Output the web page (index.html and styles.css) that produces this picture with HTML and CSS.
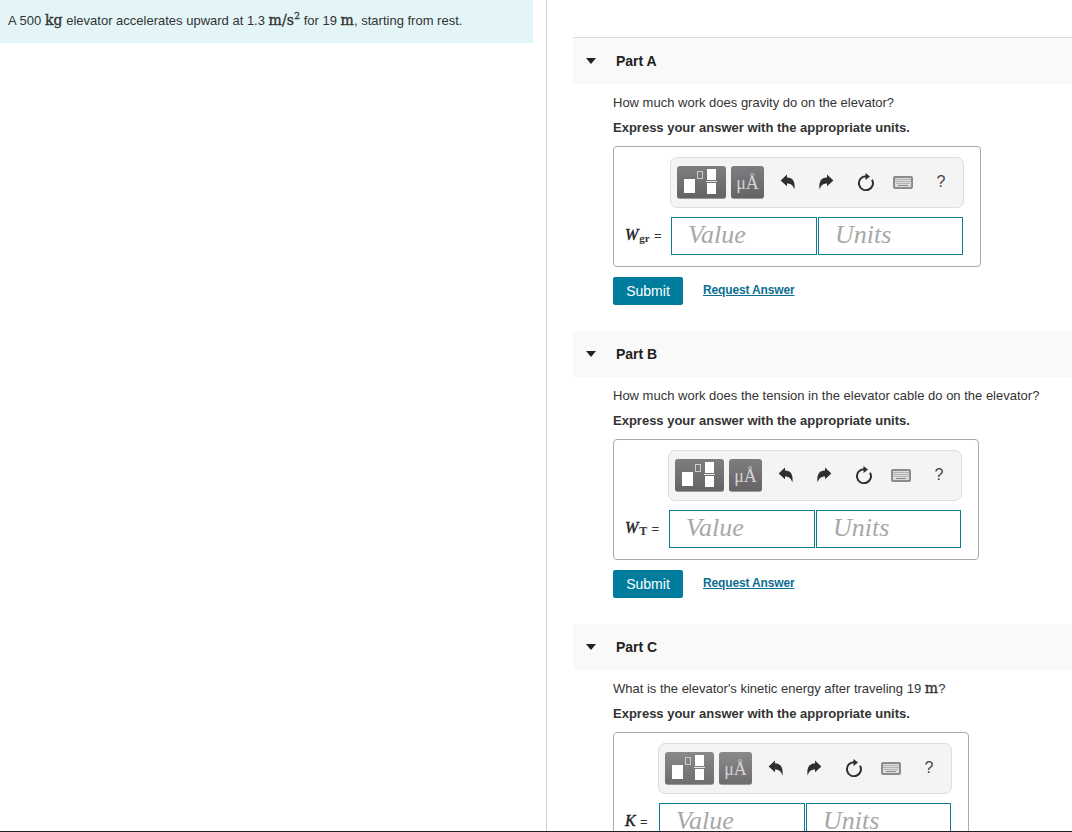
FILE: index.html
```html
<!DOCTYPE html>
<html lang="en">
<head>
<meta charset="utf-8">
<title>Elevator work problem</title>
<link rel="stylesheet" href="styles.css">
</head>
<body>
<svg class="defs" width="0" height="0" aria-hidden="true">
  <symbol id="i-undo" viewBox="0 0 16 16"><path d="M.6 6.4 7 .6V3.6C12 3.4 15.6 6.8 14.4 15.4 13.2 11.4 11 9.4 7 9.4V12.2Z"/></symbol>
  <symbol id="i-redo" viewBox="0 0 16 16"><path d="M15.4 6.4 9 .6V3.6C4 3.4.4 6.8 1.6 15.4 2.8 11.4 5 9.4 9 9.4V12.2Z"/></symbol>
  <symbol id="i-reset" viewBox="0 0 18 18"><path d="M15 6.7A7 7 0 1 1 9 3.2" fill="none" stroke="currentColor" stroke-width="2"/><path d="M8.5 0 13 3.5 8.5 7Z"/></symbol>
  <symbol id="i-kbd" viewBox="0 0 20 13"><rect x=".5" y=".5" width="19" height="12" rx="1.2" fill="#8b8b8b" stroke="#8b8b8b"/><rect x="2" y="2" width="16" height="9" fill="#dcdcdc"/><path d="M2.5 3.5H17.5M2.5 5.5H17.5M3.5 7.5H16.5" stroke="#8a8a8a" stroke-dasharray="1 1" fill="none"/><path d="M5 9.5H15" stroke="#8a8a8a" fill="none"/></symbol>
</svg>
<div class="page">
  <aside class="intro">
    <p class="statement">A 500 <span class="math">kg</span> elevator accelerates upward at 1.3 <span class="math">m/s<sup>2</sup></span> for 19 <span class="math">m</span>, starting from rest.</p>
  </aside>
  <main class="parts">
    <section class="part">
      <h2 class="part-head part-first"><span class="caret"></span>Part A</h2>
      <div class="part-body">
        <p class="question">How much work does gravity do on the elevator?</p>
        <p class="instruction">Express your answer with the appropriate units.</p>
        <div class="answer answer-a">
          <div class="toolbar">
            <button class="tool tool-template" type="button" aria-label="Templates"><span class="box-big"></span><span class="box-small"></span><span class="frac"><span></span><span></span></span></button>
            <button class="tool tool-symbol" type="button">μÅ</button>
            <svg class="ti"><use href="#i-undo"/></svg>
            <svg class="ti"><use href="#i-redo"/></svg>
            <svg class="ti ti-reset"><use href="#i-reset"/></svg>
            <svg class="ti ti-kbd"><use href="#i-kbd"/></svg>
            <span class="ti ti-help">?</span>
          </div>
          <div class="label"><i>W</i><sub>gr</sub> <span>=</span></div>
          <div class="fields"><input class="field" placeholder="Value"><input class="field" placeholder="Units"></div>
        </div>
        <div class="actions"><button class="submit" type="button">Submit</button><a class="request" href="#">Request Answer</a></div>
      </div>
    </section>
    <section class="part">
      <h2 class="part-head"><span class="caret"></span>Part B</h2>
      <div class="part-body">
        <p class="question">How much work does the tension in the elevator cable do on the elevator?</p>
        <p class="instruction">Express your answer with the appropriate units.</p>
        <div class="answer answer-b">
          <div class="toolbar">
            <button class="tool tool-template" type="button" aria-label="Templates"><span class="box-big"></span><span class="box-small"></span><span class="frac"><span></span><span></span></span></button>
            <button class="tool tool-symbol" type="button">μÅ</button>
            <svg class="ti"><use href="#i-undo"/></svg>
            <svg class="ti"><use href="#i-redo"/></svg>
            <svg class="ti ti-reset"><use href="#i-reset"/></svg>
            <svg class="ti ti-kbd"><use href="#i-kbd"/></svg>
            <span class="ti ti-help">?</span>
          </div>
          <div class="label"><i>W</i><sub class="cap">T</sub> <span>=</span></div>
          <div class="fields"><input class="field" placeholder="Value"><input class="field" placeholder="Units"></div>
        </div>
        <div class="actions"><button class="submit" type="button">Submit</button><a class="request" href="#">Request Answer</a></div>
      </div>
    </section>
    <section class="part">
      <h2 class="part-head"><span class="caret"></span>Part C</h2>
      <div class="part-body">
        <p class="question">What is the elevator's kinetic energy after traveling 19 <span class="math">m</span>?</p>
        <p class="instruction">Express your answer with the appropriate units.</p>
        <div class="answer answer-c">
          <div class="toolbar">
            <button class="tool tool-template" type="button" aria-label="Templates"><span class="box-big"></span><span class="box-small"></span><span class="frac"><span></span><span></span></span></button>
            <button class="tool tool-symbol" type="button">μÅ</button>
            <svg class="ti"><use href="#i-undo"/></svg>
            <svg class="ti"><use href="#i-redo"/></svg>
            <svg class="ti ti-reset"><use href="#i-reset"/></svg>
            <svg class="ti ti-kbd"><use href="#i-kbd"/></svg>
            <span class="ti ti-help">?</span>
          </div>
          <div class="label"><i>K</i> <span>=</span></div>
          <div class="fields"><input class="field" placeholder="Value"><input class="field" placeholder="Units"></div>
        </div>
      </div>
    </section>
  </main>
</div>
</body>
</html>
```
FILE: styles.css
```css
* { box-sizing: border-box; }
html, body { margin: 0; padding: 0; }
body {
  background: #fff;
  color: #333;
  font-family: "Liberation Sans", Arial, sans-serif;
  font-size: 13px;
  overflow: hidden;
}
.defs { position: absolute; }
.page {
  display: flex;
  height: 832px;
  border-bottom: 1px solid #222;
  overflow: hidden;
}
.intro {
  width: 547px;
  flex: none;
  border-right: 1px solid #c4d3e0;
  padding-right: 13px;
}
.statement {
  margin: 0;
  height: 43px;
  padding: 12px 0 0 8px;
  line-height: 18px;
  background: #e4f5f7;
  white-space: nowrap;
}
.math {
  font-family: "DejaVu Serif", "Liberation Serif", serif;
  font-size: 14px;
  color: #333;
  line-height: 0;
  -webkit-text-stroke: .35px #333;
  letter-spacing: .15px;
}
.math sup { font-size: 9px; line-height: 0; }
.parts {
  flex: 1;
  min-width: 0;
  padding-top: 37px;
  padding-left: 26px;
}
.part { height: 293px; }
.part-head {
  display: flex;
  align-items: center;
  height: 47px;
  margin: 0;
  padding: 0 0 1px 13px;
  background: #f9f9f9;
  border-top: 1px solid #fff;
  font-size: 14px;
  font-weight: 700;
  color: #222;
}
.part-first { border-top-color: #ddd; }
.caret {
  width: 0;
  height: 0;
  margin-right: 20px;
  border-left: 5.5px solid transparent;
  border-right: 5.5px solid transparent;
  border-top: 6px solid #222;
}
.part-body { padding: 10px 0 0 40px; }
.question {
  margin: 0;
  line-height: 18px;
  white-space: nowrap;
}
.instruction {
  margin: 7px 0 0;
  line-height: 18px;
  font-weight: 700;
  white-space: nowrap;
}
.answer {
  display: inline-grid;
  grid-template-columns: auto auto;
  align-items: center;
  margin-top: 9px;
  padding: 10px 16px 11px 11px;
  border: 1px solid #aaa;
  border-radius: 4px;
  vertical-align: top;
}
.toolbar {
  grid-column: 2;
  display: flex;
  align-items: center;
  width: 294px;
  height: 51px;
  margin-left: -1px;
  margin-bottom: 9px;
  padding: 0 0 1px 6px;
  background: #f4f4f4;
  border: 1px solid #ddd;
  border-radius: 7px;
}
.tool {
  position: relative;
  height: 33px;
  padding: 0;
  border: 0;
  border-bottom: 1px solid #999;
  border-radius: 3px;
  background: linear-gradient(#7f7d80, #656365);
}
.answer-c .tool { background: linear-gradient(#8a888b, #6f6d70); }
.tool-template { width: 49px; }
.tool-template span { position: absolute; display: block; }
.box-big { left: 7px; top: 13px; width: 11px; height: 14px; background: #fff; }
.box-small { left: 20px; top: 5px; width: 6px; height: 8px; border: 1px solid #ccc; }
.frac { left: 30px; top: 3px; width: 9px; height: 25px; }
.frac span { left: 0; width: 9px; height: 11px; background: #fff; }
.frac span:first-child { top: 0; }
.frac span:last-child { bottom: 0; }
.frac::after {
  content: "";
  position: absolute;
  left: -1px;
  top: 12px;
  width: 11px;
  height: 1px;
  background: #e8e8e8;
}
.tool-symbol {
  width: 33px;
  margin-left: 5px;
  margin-right: 16px;
  padding-top: 3px;
  font-family: "Liberation Serif", serif;
  font-size: 18px;
  color: #d4d4d4;
}
.ti {
  width: 16px;
  height: 16px;
  margin: 0 22px 0 0;
  color: #2f2f2f;
  fill: currentColor;
  flex: none;
}
.ti-reset { width: 18px; height: 18px; margin: 0 18px 0 1px; }
.ti-kbd { width: 20px; height: 13px; margin: 0 20px 0 0; }
.ti-help {
  width: 16px;
  height: auto;
  margin: 0;
  text-align: center;
  font-size: 16px;
  color: #444;
}
.label {
  padding-bottom: 2px;
  font-family: "Liberation Serif", serif;
  font-size: 13px;
  white-space: nowrap;
}
.answer-a .label { width: 46px; }
.answer-b .label { width: 44px; }
.answer-c .label { width: 34px; }
.label i {
  font-size: 16px;
  color: #222;
  -webkit-text-stroke: .4px #222;
}
.label sub {
  font-size: 11px;
  font-weight: 700;
  line-height: 0;
  vertical-align: -2px;
  margin-left: 1px;
}
.label sub.cap { font-size: 12px; }
.label span { font-family: "Liberation Sans", sans-serif; margin-left: 1px; }
.fields {
  display: flex;
  gap: 1px;
}
.field {
  width: 146px;
  height: 38px;
  margin: 0;
  padding: 0 0 2px 16px;
  border: 1px solid #0b7c99;
  border-radius: 0;
  outline: 0;
  font-family: "Liberation Serif", serif;
  font-size: 26px;
  font-style: italic;
  background: #fff;
}
.field + .field { width: 145px; }
.field::placeholder { color: #a8a8a8; opacity: 1; }
.actions {
  display: flex;
  align-items: center;
  margin-top: 10px;
}
.submit {
  width: 70px;
  height: 28px;
  padding: 0;
  border: 0;
  border-radius: 2px;
  background: #007c9e;
  color: #fff;
  font-family: "Liberation Sans", sans-serif;
  font-size: 14px;
}
.request {
  margin-left: 20px;
  margin-top: -2px;
  color: #0c6f92;
  font-size: 12px;
  font-weight: 700;
  letter-spacing: -.15px;
}
```
